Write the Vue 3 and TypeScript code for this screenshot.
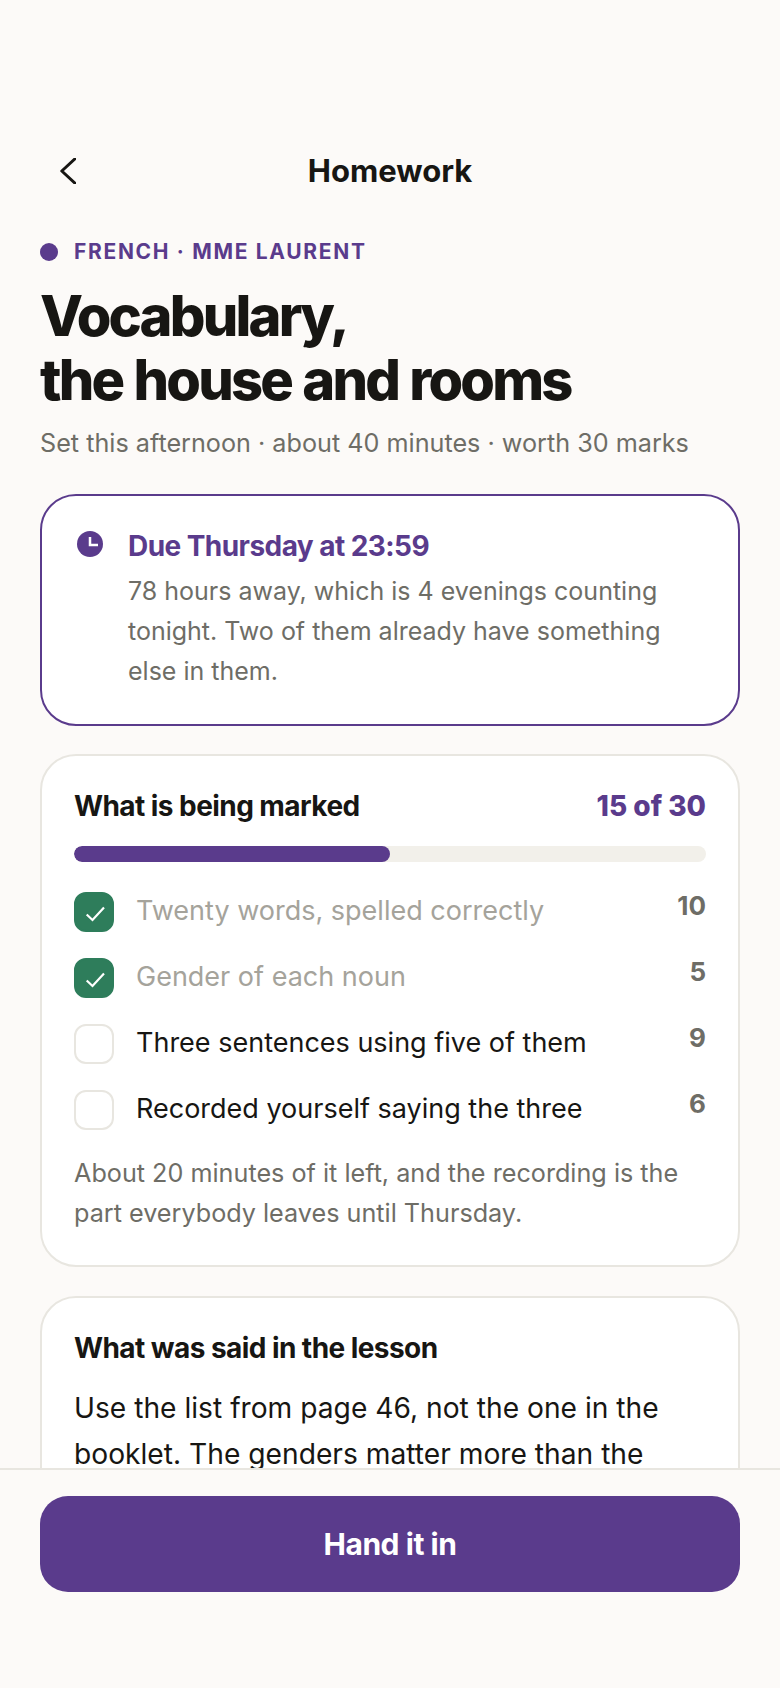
<script setup lang="ts">
import { computed } from "vue";

type Mark = { label: string; marks: number; done: boolean };

const marks: Mark[] = [
  { label: "Twenty words, spelled correctly", marks: 10, done: true },
  { label: "Gender of each noun", marks: 5, done: true },
  { label: "Three sentences using five of them", marks: 9, done: false },
  { label: "Recorded yourself saying the three", marks: 6, done: false },
];

const total = computed(() => marks.reduce((sum, m) => sum + m.marks, 0));
const earned = computed(() =>
  marks.filter((m) => m.done).reduce((sum, m) => sum + m.marks, 0),
);
const progress = computed(() => `${(earned.value / total.value) * 100}%`);
</script>

<template>
  <div class="page">
    <div class="scroll">
      <header class="nav">
        <button type="button" class="back" aria-label="Back">
          <svg width="16" height="26" viewBox="0 0 16 26">
            <path d="M14.8 1 L1.8 13 L14.8 25" />
          </svg>
        </button>
        <h1 class="nav-title">Homework</h1>
        <span></span>
      </header>

      <div class="eyebrow">
        <span class="dot"></span>
        <span>FRENCH · MME LAURENT</span>
      </div>
      <h2 class="headline">Vocabulary,<br />the house and rooms</h2>
      <p class="sub">Set this afternoon · about 40 minutes · worth 30 marks</p>

      <section class="card due">
        <svg class="clock" width="26" height="26" viewBox="0 0 26 26">
          <circle cx="13" cy="13" r="13" />
          <path d="M13 6 V14 H21" />
        </svg>
        <div>
          <div class="due-title">Due Thursday at 23:59</div>
          <p class="note">
            78 hours away, which is 4 evenings counting tonight. Two of them
            already have something else in them.
          </p>
        </div>
      </section>

      <section class="card marked">
        <div class="card-head">
          <h3 class="card-title">What is being marked</h3>
          <span class="score">{{ earned }} of {{ total }}</span>
        </div>
        <div class="track">
          <div class="fill" :style="{ width: progress }"></div>
        </div>
        <ul class="list">
          <li v-for="m in marks" :key="m.label" class="row">
            <span class="box" :class="{ checked: m.done }">
              <svg v-if="m.done" width="22" height="18" viewBox="0 0 22 18">
                <path d="M3.7 9.5 L9.5 15 L21 2.5" />
              </svg>
            </span>
            <span class="label" :class="{ done: m.done }">{{ m.label }}</span>
            <span class="num">{{ m.marks }}</span>
          </li>
        </ul>
        <p class="note foot">
          About 20 minutes of it left, and the recording is the part everybody
          leaves until Thursday.
        </p>
      </section>

      <section class="card said">
        <h3 class="card-title">What was said in the lesson</h3>
        <p class="quote">
          Use the list from page 46, not the one in the booklet. The genders
          matter more than the
        </p>
      </section>
    </div>

    <footer class="footer">
      <button type="button" class="cta">Hand it in</button>
    </footer>
  </div>
</template>

<style>
html,
body {
  margin: 0;
  background: #fcfaf8;
}
</style>

<style scoped>
.page {
  height: 1688px;
  display: flex;
  flex-direction: column;
  background: #fcfaf8;
  color: #171613;
  font-family: Inter, "Liberation Sans", sans-serif;
}

.scroll {
  flex: 1;
  min-height: 0;
  overflow: hidden;
  padding: 136px 40px 0;
}

.nav {
  display: grid;
  grid-template-columns: 56px 1fr 56px;
  align-items: center;
  height: 68px;
}

.back {
  width: 56px;
  height: 56px;
  margin-top: 2px;
  padding: 0;
  border: 0;
  background: none;
  display: flex;
  align-items: center;
  justify-content: center;
}

.back path {
  fill: none;
  stroke: #171613;
  stroke-width: 3;
  stroke-linecap: round;
  stroke-linejoin: round;
}

.nav-title {
  margin: 0;
  text-align: center;
  font-size: 31px;
  font-weight: 700;
}

.eyebrow {
  display: flex;
  align-items: center;
  gap: 16px;
  margin-top: 35px;
  font-size: 21px;
  line-height: 26px;
  font-weight: 700;
  letter-spacing: 0.08em;
  color: #5a3b8c;
}

.dot {
  width: 18px;
  height: 18px;
  border-radius: 50%;
  background: #5a3b8c;
}

.headline {
  margin: 20px 0 0;
  font-size: 56px;
  line-height: 63.5px;
  font-weight: 800;
  letter-spacing: -0.05em;
  word-spacing: 1.7px;
}

.sub {
  margin: 13px 0 0;
  font-size: 25.2px;
  line-height: 36px;
  color: #6e6d66;
}

.card {
  margin-top: 28px;
  padding: 32px;
  background: #fff;
  border: 2px solid #e8e6e0;
  border-radius: 36px;
}

.due {
  margin-top: 33px;
  padding: 33px 32px;
  display: flex;
  gap: 25px;
  align-items: flex-start;
  border-color: #5a3b8c;
}

.clock {
  flex: none;
  margin: 2px 0 0 3px;
}

.clock circle {
  fill: #5a3b8c;
}

.clock path {
  fill: none;
  stroke: #fff;
  stroke-width: 2.5;
}

.due-title {
  font-size: 28px;
  line-height: 34px;
  font-weight: 700;
  letter-spacing: -0.02em;
  color: #5a3b8c;
}

.note {
  margin: 8px 0 0;
  font-size: 25px;
  line-height: 40px;
  color: #6e6d66;
}

.marked {
  padding-top: 33px;
}

.card-head {
  display: flex;
  justify-content: space-between;
  align-items: center;
}

.card-title {
  margin: 0;
  font-size: 28px;
  line-height: 34px;
  font-weight: 700;
  letter-spacing: -0.02em;
}

.score {
  font-size: 28px;
  line-height: 34px;
  font-weight: 800;
  color: #5a3b8c;
}

.track {
  height: 16px;
  margin-top: 23px;
  border-radius: 8px;
  background: #f2f0ea;
  overflow: hidden;
}

.fill {
  height: 100%;
  border-radius: 8px;
  background: #5a3b8c;
}

.list {
  list-style: none;
  margin: 30px 0 0;
  padding: 0;
  display: flex;
  flex-direction: column;
  gap: 26px;
}

.row {
  display: flex;
  align-items: flex-start;
  gap: 22px;
}

.box {
  flex: none;
  box-sizing: border-box;
  width: 40px;
  height: 40px;
  border: 2px solid #e8e6e0;
  border-radius: 12px;
  display: flex;
  align-items: center;
  justify-content: center;
}

.box.checked {
  background: #2e7d5b;
  border-color: #2e7d5b;
}

.box svg {
  margin-top: 3px;
}

.box path {
  fill: none;
  stroke: #fff;
  stroke-width: 2.2;
}

.label {
  flex: 1;
  font-size: 27px;
  line-height: 38px;
}

.label.done {
  color: #a5a39b;
}

.num {
  font-size: 26px;
  line-height: 28px;
  font-weight: 700;
  color: #6e6d66;
}

.foot {
  margin-top: 23px;
  font-size: 25.2px;
}

.said {
  margin-top: 29px;
  padding-top: 33px;
}

.quote {
  margin: 20px 0 0;
  font-size: 28.2px;
  line-height: 46px;
}

.footer {
  flex: none;
  padding: 26px 40px 96px;
  border-top: 2px solid #e8e6e0;
}

.cta {
  display: block;
  width: 100%;
  height: 96px;
  border: 0;
  border-radius: 28px;
  background: #5a3b8c;
  color: #fff;
  font-family: inherit;
  font-size: 30px;
  font-weight: 700;
  letter-spacing: -0.015em;
}
</style>
